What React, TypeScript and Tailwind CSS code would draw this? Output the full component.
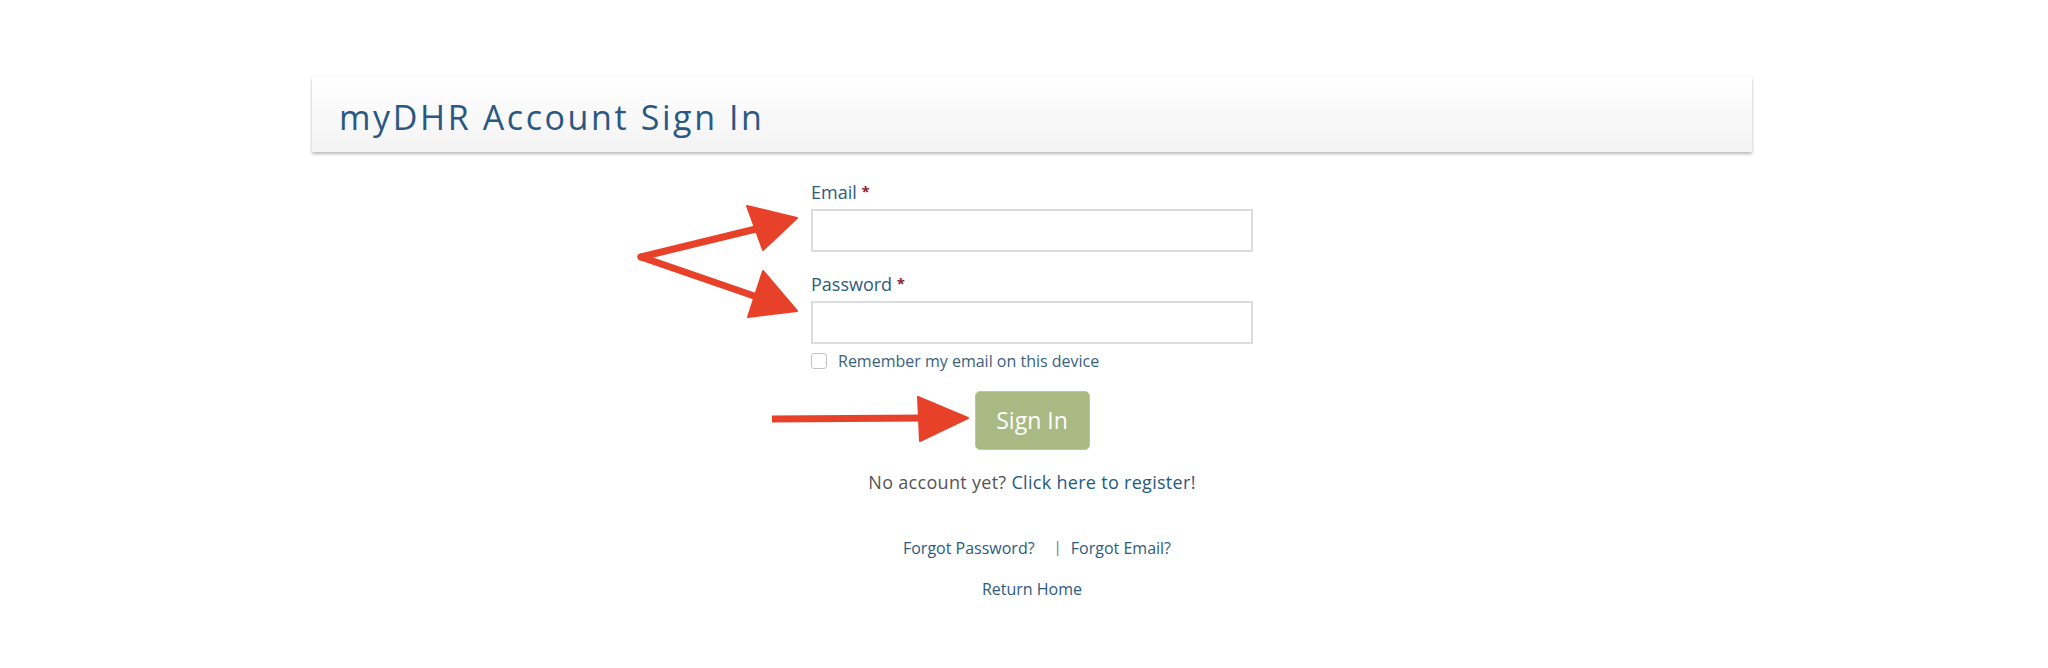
import React from "react";

const font = { fontFamily: "'Open Sans', Lato, Arial, sans-serif" };

function Arrows() {
  return (
    <svg
      className="absolute left-0 top-0 pointer-events-none"
      width={2048}
      height={668}
      viewBox="0 0 2048 668"
    >
      <g fill="#e8412a" stroke="#e8412a" strokeLinejoin="round">
        <line x1="641" y1="257" x2="760" y2="228" strokeWidth="7" strokeLinecap="round" />
        <polygon points="797,218 747,206 763,250" strokeWidth="2" />
        <line x1="641" y1="257" x2="760" y2="298" strokeWidth="7" strokeLinecap="round" />
        <polygon points="797,311 763,271 748,317" strokeWidth="2" />
        <line x1="772" y1="419" x2="925" y2="418" strokeWidth="7" />
        <polygon points="968,418 918,397 920,441" strokeWidth="2" />
      </g>
    </svg>
  );
}

export default function App() {
  return (
    <div className="relative w-[2048px] h-[668px] bg-white overflow-hidden" style={font}>
      <div className="ml-[312px] w-[1440px] pt-[77px]">
        <div className="h-[75px] flex items-center pl-[27px] pt-[4px] bg-gradient-to-b from-white to-[#f3f3f3] shadow-[0_2px_3px_rgba(0,0,0,0.28)]">
          <h1 className="text-[34px] leading-[40px] font-normal text-[#2a5882] tracking-[2.6px]">
            myDHR Account Sign In
          </h1>
        </div>

        <div className="mx-auto w-[442px] mt-[28px] flex flex-col">
          <label className="text-[18px] leading-[24px] text-[#2d5b80]">
            Email <span className="text-[#8c2334] text-[15px] font-bold relative -top-[2px]">*</span>
          </label>
          <div className="mt-[4px] h-[43px] border-2 border-[#dcdcdc] bg-white" />

          <label className="mt-[20px] text-[18px] leading-[24px] text-[#2d5b80]">
            Password <span className="text-[#8c2334] text-[15px] font-bold relative -top-[2px]">*</span>
          </label>
          <div className="mt-[4px] h-[43px] border-2 border-[#dcdcdc] bg-white" />

          <div className="mt-[8px] flex items-center gap-[11px] h-[18px]">
            <div className="w-[16px] h-[16px] rounded-[3px] border border-[#c4c4c4] bg-white" />
            <span className="text-[16px] leading-[18px] text-[#3a5f80]">
              Remember my email on this device
            </span>
          </div>

          <div className="mt-[21px] flex justify-center">
            <button className="w-[115px] h-[59px] rounded-[5px] bg-[#a9b983] border border-[#bccb98] text-white text-[23px] leading-none">
              Sign In
            </button>
          </div>

          <p className="mt-[20px] text-center text-[18px] leading-[24px] text-[#555555] whitespace-nowrap tracking-[0.3px]">
            No account yet? <span className="text-[#245a82]">Click here to register!</span>
          </p>

          <div className="mt-[43px] pl-[10px] flex justify-center items-center text-[16px] leading-[22px] text-[#2d5b80] whitespace-nowrap">
            <span>Forgot Password?</span>
            <span className="ml-[19px] mr-[9px] text-[#777] text-[15px] -translate-y-[2px]">|</span>
            <span>Forgot Email?</span>
          </div>

          <p className="mt-[19px] text-center text-[16px] leading-[22px] text-[#2d5b80]">
            Return Home
          </p>
        </div>
      </div>
      <Arrows />
    </div>
  );
}
